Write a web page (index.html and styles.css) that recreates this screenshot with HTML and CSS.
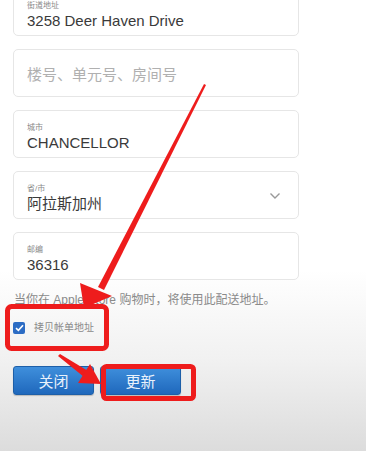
FILE: index.html
```html
<!DOCTYPE html>
<html lang="zh-CN">
<head>
  <meta charset="UTF-8" />
  <meta name="viewport" content="width=device-width, initial-scale=1" />
  <title>配送地址</title>
  <link rel="stylesheet" href="styles.css">
</head>
<body>
  <div class="page">
    <form class="address-form">
      <div class="field">
        <span class="field-label">街道地址</span>
        <span class="field-value">3258 Deer Haven Drive</span>
      </div>

      <div class="field field-empty">
        <span class="field-placeholder">楼号、单元号、房间号</span>
      </div>

      <div class="field">
        <span class="field-label">城市</span>
        <span class="field-value">CHANCELLOR</span>
      </div>

      <div class="field field-select">
        <div>
          <span class="field-label">省/市</span>
          <span class="field-value">阿拉斯加州</span>
        </div>
        <svg class="chevron" width="12" height="8" viewBox="0 0 12 8">
          <path d="M1.5 1.5 L6 6 L10.5 1.5" fill="none" stroke="#999" stroke-width="1.4" />
        </svg>
      </div>

      <div class="field">
        <span class="field-label">邮编</span>
        <span class="field-value">36316</span>
      </div>

      <p class="note">当你在 Apple Store 购物时，将使用此配送地址。</p>

      <label class="copy-billing">
        <span class="checkbox">
          <svg width="9" height="8" viewBox="0 0 9 8">
            <path d="M1 4.2 L3.4 6.4 L8 1.2" fill="none" stroke="#fff" stroke-width="1.6" />
          </svg>
        </span>
        拷贝帐单地址
      </label>

      <div class="actions">
        <button type="button" class="btn">关闭</button>
        <button type="button" class="btn">更新</button>
      </div>
    </form>

    <!-- red annotation marks drawn over the screenshot -->
    <svg class="marks" width="366" height="451" viewBox="0 0 366 451">
      <polygon points="204,84 206,85 104,290 98,287" fill="#ee1c1c" />
      <polygon points="84,308 80,283 112,296" fill="#ee1c1c" />
      <rect x="7.5" y="306.5" width="99" height="42" rx="4" fill="none" stroke="#ee1c1c" stroke-width="5" />
      <polygon points="58,356 60,354 88,371 84,377" fill="#ee1c1c" />
      <polygon points="101,384 78,383 90,364" fill="#ee1c1c" />
      <rect x="103.5" y="366.5" width="90" height="32" rx="3" fill="none" stroke="#ee1c1c" stroke-width="5" />
    </svg>
  </div>
</body>
</html>
```

FILE: styles.css
```css
/* Base */
body {
  margin: 0;
  font-family: "Liberation Sans", "Noto Sans CJK SC", sans-serif;
  color: #333;
}

.page {
  position: relative;
  width: 366px;
  height: 451px;
  overflow: hidden;
  background: linear-gradient(to bottom, #fff 0, #fff 270px, #f1f1f1 360px, #dcdcdc 451px);
}

.address-form {
  width: 286px;
  margin: -12px 0 0 13px;
  display: flex;
  flex-direction: column;
}

/* Input boxes */
.field {
  box-sizing: border-box;
  height: 48px;
  margin-bottom: 13px;
  padding: 12px 13px 0;
  border: 1px solid #e6e6e6;
  border-radius: 5px;
  background: #fff;
  display: flex;
  flex-direction: column;
}

.field-label {
  font-size: 8px;
  line-height: 10px;
  color: #8a8a8a;
}

.field-value {
  font-size: 15px;
  line-height: 20px;
  color: #3a3a3a;
}

.field-empty {
  justify-content: center;
  padding-top: 0;
}

.field-placeholder {
  font-size: 15px;
  color: #b0b0b0;
}

.field-select {
  flex-direction: row;
  justify-content: space-between;
}

.field-select > div {
  display: flex;
  flex-direction: column;
}

.chevron {
  margin: 8px 4px 0 0;
}

/* Note + checkbox */
.note {
  margin: 0 0 0 1px;
  height: 14px;
  font-size: 12px;
  line-height: 14px;
  color: #8a8a8a;
  white-space: nowrap;
}

.copy-billing {
  display: flex;
  align-items: center;
  gap: 9px;
  height: 12px;
  margin-top: 15px;
  font-size: 10px;
  line-height: 12px;
  color: #8a8a8a;
}

.checkbox {
  width: 12px;
  height: 12px;
  border-radius: 2px;
  background: #2c6cc4;
  display: flex;
  align-items: center;
  justify-content: center;
}

/* Buttons */
.actions {
  display: flex;
  gap: 6px;
  margin-top: 32px;
}

.btn {
  width: 81px;
  height: 29px;
  border: 1px solid #1d5fa8;
  border-radius: 3px;
  background: linear-gradient(to bottom, #3f8fdc, #1f68bc);
  color: #e8f1fb;
  font-family: inherit;
  font-size: 15px;
  box-shadow: 0 1px 1px rgba(0, 0, 0, 0.2);
}

/* Annotation overlay */
.marks {
  position: absolute;
  top: 0;
  left: 0;
  pointer-events: none;
}
```
